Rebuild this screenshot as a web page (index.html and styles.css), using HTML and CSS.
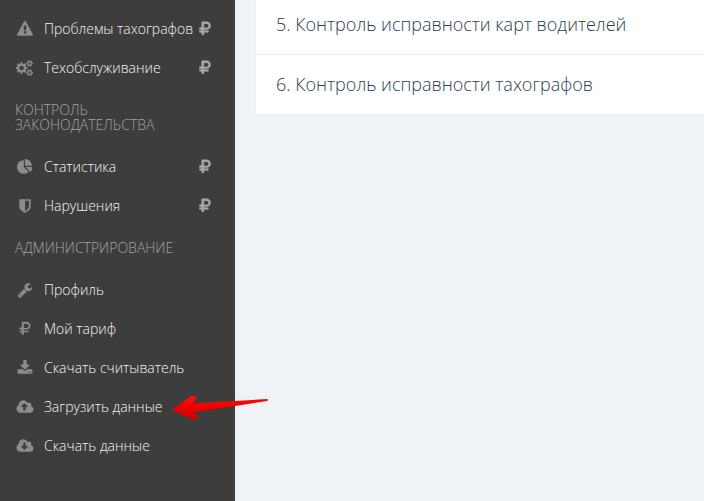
FILE: index.html
```html
<!DOCTYPE html>
<html lang="ru">
<head>
  <meta charset="UTF-8">
  <meta name="viewport" content="width=device-width, initial-scale=1.0">
  <title>Загрузка данных</title>
  <link rel="stylesheet" href="styles.css">
</head>
<body>
  <!-- Icon set -->
  <svg class="sprite" aria-hidden="true">
    <symbol id="warning" viewBox="0 0 1792 1792"><path d="M1024 1375v-190q0-14-9.500-23.500t-22.500-9.500h-192q-13 0-22.500 9.500t-9.500 23.500v190q0 14 9.500 23.500t22.500 9.500h192q13 0 22.500-9.500t9.500-23.500zm-2-374l18-459q0-12-10-19-13-11-24-11h-220q-11 0-24 11-10 7-10 21l17 457q0 10 10 16.500t24 6.500h185q14 0 23.500-6.500t10.500-16.500zm-14-934l768 1408q35 63-2 126-17 29-46.500 46t-63.500 17h-1536q-34 0-63.500-17t-46.500-46q-37-63-2-126l768-1408q17-31 47-49t65-18 65 18 47 49z"/></symbol>
    <symbol id="cogs" viewBox="0 0 1920 1792"><path d="M832 896q0-106-75-181t-181-75-181 75-75 181 75 181 181 75 181-75 75-181zm768 512q0-52-38-90t-90-38-90 38-38 90q0 53 37.500 90.500t90.500 37.500 90.500-37.500 37.500-90.500zm0-1024q0-52-38-90t-90-38-90 38-38 90q0 53 37.500 90.500t90.500 37.500 90.500-37.500 37.500-90.500zm-384 421v185q0 10-7 19.500t-16 10.500l-155 24q-11 35-32 76 34 48 90 115 7 11 7 20 0 12-7 19-23 30-82.500 89.500t-78.500 59.500q-11 0-21-7l-115-90q-37 19-77 31-11 108-23 155-7 24-30 24h-186q-11 0-20-7.500t-10-17.500l-23-153q-34-10-75-31l-118 89q-7 7-20 7-11 0-21-8-144-133-144-160 0-9 7-19 10-14 41-53t47-61q-23-44-35-82l-152-24q-10-1-17-9.500t-7-19.500v-185q0-10 7-19.500t16-10.500l155-24q11-35 32-76-34-48-90-115-7-11-7-20 0-12 7-20 22-30 82-89t79-59q11 0 21 7l115 90q34-18 77-32 11-108 23-154 7-24 30-24h186q11 0 20 7.500t10 17.500l23 153q34 10 75 31l118-89q8-7 20-7 11 0 21 8 144 133 144 160 0 8-7 19-12 16-42 54t-45 60q23 48 34 82l152 23q10 2 17 10.500t7 19.500zm640 533v140q0 16-149 31-12 27-30 52 51 113 51 138 0 4-4 7-122 71-124 71-8 0-46-47t-52-68q-20 2-30 2t-30-2q-14 21-52 68t-46 47q-2 0-124-71-4-3-4-7 0-25 51-138-18-25-30-52-149-15-149-31v-140q0-16 149-31 13-29 30-52-51-113-51-138 0-4 4-7 4-2 35-20t59-34 30-16q8 0 46 46.500t52 67.500q20-2 30-2t30 2q51-71 92-112l6-2q4 0 124 70 4 3 4 7 0 25-51 138 17 23 30 52 149 15 149 31zm0-1024v140q0 16-149 31-12 27-30 52 51 113 51 138 0 4-4 7-122 71-124 71-8 0-46-47t-52-68q-20 2-30 2t-30-2q-14 21-52 68t-46 47q-2 0-124-71-4-3-4-7 0-25 51-138-18-25-30-52-149-15-149-31v-140q0-16 149-31 13-29 30-52-51-113-51-138 0-4 4-7 4-2 35-20t59-34 30-16q8 0 46 46.500t52 67.500q20-2 30-2t30 2q51-71 92-112l6-2q4 0 124 70 4 3 4 7 0 25-51 138 17 23 30 52 149 15 149 31z"/></symbol>
    <symbol id="pie" viewBox="0 0 1792 1792"><path d="M768 890l546 546q-106 108-247.500 168t-298.500 60q-209 0-385.500-103t-279.500-279.500-103-385.500 103-385.500 279.500-279.500 385.500-103v762zm187 6h773q0 157-60 298.500t-168 247.500zm709-128h-768v-768q209 0 385.500 103t279.500 279.500 103 385.500z"/></symbol>
    <symbol id="shield" viewBox="0 0 1792 1792"><path d="M1344 960v-640h-448v1137q119-63 213-137 235-184 235-360zm192-768v768q0 86-33.500 170.500t-83 150-118 127.500-126.500 103-121 77.500-89.500 49.500-42.500 20q-12 6-26 6t-26-6q-16-7-42.500-20t-89.500-49.500-121-77.500-126.500-103-118-127.500-83-150-33.500-170.500v-768q0-26 19-45t45-19h1152q26 0 45 19t19 45z"/></symbol>
    <symbol id="wrench" viewBox="0 0 1792 1792"><path d="M448 1472q0-26-19-45t-45-19-45 19-19 45 19 45 45 19 45-19 19-45zm644-420l-682 682q-37 37-90 37-52 0-91-37l-106-108q-38-36-38-90 0-53 38-91l681-681q39 98 114.500 173.500t173.500 114.500zm634-435q0 39-23 106-47 134-164.500 217.500t-258.500 83.500q-185 0-316.500-131.500t-131.500-316.500 131.500-316.500 316.500-131.500q58 0 121.500 16.500t107.500 46.500q16 11 16 28t-16 28l-293 169v224l193 107q5-3 79-48.500t135.500-81 70.500-35.500q15 0 23.500 10t8.500 25z"/></symbol>
    <symbol id="ruble" viewBox="0 0 1792 1792"><path fill-rule="evenodd" d="M1310 537q0-105-67-170t-173-65h-306v470h306q106 0 173-65t67-170zm203 0q0 182-120 298t-308 116h-321v127h478q14 0 23 9t9 23v128q0 14-9 23t-23 9h-478v234q0 14-9 23t-24 9h-166q-14 0-23-9t-9-23v-234h-224q-14 0-23-9t-9-23v-128q0-14 9-23t23-9h224v-127h-224q-14 0-23-9t-9-23v-149q0-14 9-23t23-9h224v-611q0-14 9-23t23-9h519q188 0 308 115t120 297z"/></symbol>
    <symbol id="download" viewBox="0 0 1664 1792"><path d="M1280 1344q0-26-19-45t-45-19-45 19-19 45 19 45 45 19 45-19 19-45zm256 0q0-26-19-45t-45-19-45 19-19 45 19 45 45 19 45-19 19-45zm128-224v320q0 40-28 68t-68 28h-1472q-40 0-68-28t-28-68v-320q0-40 28-68t68-28h465l135 136q58 56 136 56t136-56l136-136h464q40 0 68 28t28 68zm-325-569q17 41-14 70l-448 448q-18 19-45 19t-45-19l-448-448q-31-29-14-70 17-39 59-39h256v-448q0-26 19-45t45-19h256q26 0 45 19t19 45v448h256q42 0 59 39z"/></symbol>
    <symbol id="cloud-up" viewBox="0 0 1920 1792"><path d="M1280 864q0-14-9-23l-352-352q-9-9-23-9t-23 9l-351 351q-10 12-10 24 0 14 9 23t23 9h224v352q0 13 9.500 22.500t22.500 9.500h192q13 0 22.500-9.500t9.500-22.500v-352h224q13 0 22.500-9.500t9.500-22.500zm640 288q0 159-112.500 271.500t-271.500 112.500h-1088q-185 0-316.500-131.500t-131.500-316.500q0-130 70-240t188-165q-2-30-2-43 0-212 150-362t362-150q156 0 285.500 87t188.500 231q71-62 166-62 106 0 181 75t75 181q0 76-41 138 130 31 213.500 135.500t83.500 238.500z"/></symbol>
    <symbol id="cloud-down" viewBox="0 0 1920 1792"><path d="M1280 928q0-14-9-23t-23-9h-224v-352q0-13-9.500-22.500t-22.500-9.500h-192q-13 0-22.500 9.500t-9.500 22.500v352h-224q-13 0-22.500 9.500t-9.500 22.500q0 14 9 23l352 352q9 9 23 9t23-9l351-351q10-12 10-24zm640 224q0 159-112.500 271.500t-271.500 112.500h-1088q-185 0-316.500-131.500t-131.500-316.500q0-130 70-240t188-165q-2-30-2-43 0-212 150-362t362-150q156 0 285.500 87t188.500 231q71-62 166-62 106 0 181 75t75 181q0 76-41 138 130 31 213.500 135.500t83.500 238.500z"/></symbol>
  </svg>

  <nav class="sidebar">
    <a href="#"><svg class="icon"><use href="#warning"/></svg><span>Проблемы тахографов</span><svg class="paid"><use href="#ruble"/></svg></a>
    <a href="#"><svg class="icon"><use href="#cogs"/></svg><span>Техобслуживание</span><svg class="paid"><use href="#ruble"/></svg></a>

    <h3>Контроль законодательства</h3>
    <a href="#"><svg class="icon"><use href="#pie"/></svg><span>Статистика</span><svg class="paid"><use href="#ruble"/></svg></a>
    <a href="#"><svg class="icon"><use href="#shield"/></svg><span>Нарушения</span><svg class="paid"><use href="#ruble"/></svg></a>

    <h3>Администрирование</h3>
    <a href="#"><svg class="icon"><use href="#wrench"/></svg><span>Профиль</span></a>
    <a href="#"><svg class="icon"><use href="#ruble"/></svg><span>Мой тариф</span></a>
    <a href="#"><svg class="icon"><use href="#download"/></svg><span>Скачать считыватель</span></a>
    <a href="#"><svg class="icon"><use href="#cloud-up"/></svg><span>Загрузить данные</span>
      <svg class="arrow" viewBox="0 0 98 26">
        <defs>
          <linearGradient id="red" x1="0" y1="0" x2="0" y2="1">
            <stop offset="0" stop-color="#ff1010"/>
            <stop offset="0.5" stop-color="#ee0000"/>
            <stop offset="1" stop-color="#d00000"/>
          </linearGradient>
        </defs>
        <path fill="url(#red)" d="M0 15L19 1Q22 0 24 2Q25 4 23 6L20 8.500L95 4Q97 5 95 6L21 17.500L24 19Q27 21 25 24Q23 26 20 24Z"/>
      </svg>
    </a>
    <a href="#"><svg class="icon"><use href="#cloud-down"/></svg><span>Скачать данные</span></a>
  </nav>

  <main>
    <div class="panel">
      <h2>5. Контроль исправности карт водителей</h2>
      <h2>6. Контроль исправности тахографов</h2>
    </div>
  </main>
</body>
</html>
```
FILE: styles.css
```css
* {
  margin: 0;
  padding: 0;
  box-sizing: border-box;
}

body {
  display: flex;
  min-height: 100vh;
  background: #eff3f6;
  font-family: 'Open Sans', sans-serif;
  font-weight: 300;
}

.sprite {
  position: absolute;
  width: 0;
  height: 0;
}

/* Sidebar */
.sidebar {
  flex: 0 0 235px;
  padding-top: 9px;
  background: #3d3d3d;
}

.sidebar a {
  position: relative;
  display: flex;
  align-items: center;
  height: 39px;
  padding: 0 22px 0 15px;
  color: #f4f4f4;
  font-size: 14px;
  text-decoration: none;
  white-space: nowrap;
}

.sidebar h3 {
  padding: 15px;
  color: #a4a4a4;
  font-size: 14px;
  font-weight: 300;
  line-height: 15px;
  text-transform: uppercase;
}

.icon {
  width: 20px;
  height: 16px;
  margin-right: 9px;
  fill: #8c8c8c;
}

.paid {
  width: 16px;
  height: 16px;
  margin-left: auto;
  fill: #aaa;
  stroke: #aaa;
  stroke-width: 60px;
}

/* Pointer over the active item */
.arrow {
  position: absolute;
  top: 8px;
  left: 172px;
  width: 98px;
  height: 26px;
}

/* Content */
main {
  flex: 1;
  padding-left: 21px;
}

.panel {
  background: #fff;
  box-shadow: 0 1px 2px #e6eaed;
}

.panel h2 {
  padding: 17px 20px 18px;
  color: #2c3e50;
  font-size: 18px;
  font-weight: 300;
  line-height: 24px;
}

.panel h2:first-child {
  padding-top: 12px;
  border-bottom: 1px solid #e7edf1;
}
```
